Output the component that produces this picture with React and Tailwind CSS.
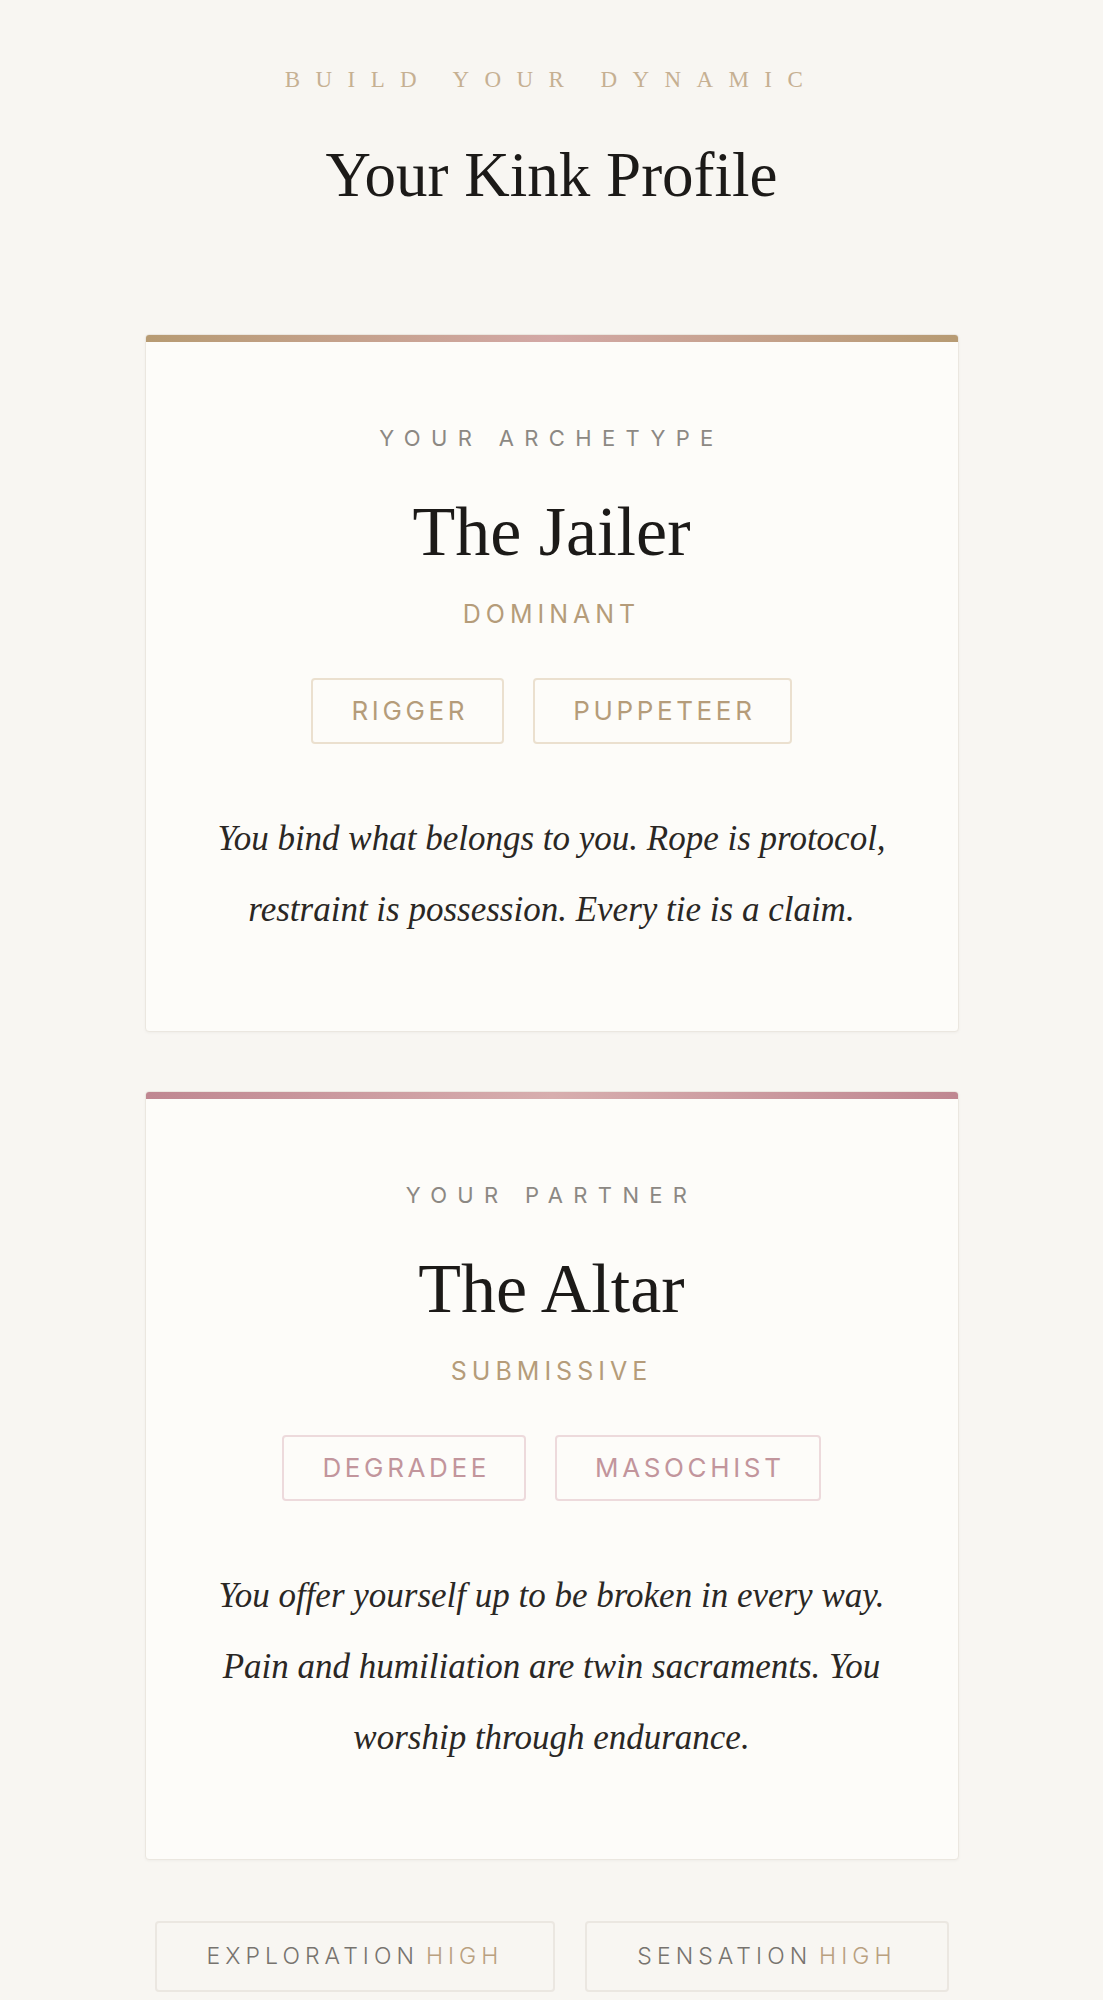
import React from "react";

const serif = { fontFamily: '"Liberation Serif", "Times New Roman", serif' };
const sans = { fontFamily: 'Inter, "Noto Sans", sans-serif' };

function Tag({ children, pink }) {
  return (
    <div
      style={sans}
      className={
        "border-2 rounded-[4px] py-[18px] pl-[38px] pr-[34px] text-[26px] leading-none tracking-[0.14em] " +
        (pink ? "border-[#eddadc] text-[#c2959c]" : "border-[#ebe0cf] text-[#b59c7a]")
      }
    >
      {children}
    </div>
  );
}

function Card({ gold, label, name, role, tags, text }) {
  return (
    <div className="w-[814px] mx-auto bg-[#fdfcf9] border border-[#ebe7e0] rounded-[4px] shadow-[0_1px_3px_rgba(0,0,0,0.04)] overflow-hidden">
      <div
        className={
          "h-[7px] " +
          (gold
            ? "bg-[linear-gradient(90deg,#b79b73_0%,#d3a8a6_50%,#b79b73_100%)]"
            : "bg-[linear-gradient(90deg,#bf8791_0%,#d7aeae_50%,#bf8791_100%)]")
        }
      />
      <div className="flex flex-col items-center pt-[85px] pb-[86px] px-[56px] text-center">
        <div
          style={sans}
          className="text-[22px] leading-none tracking-[0.47em] text-[#8c8883]"
        >
          {label}
        </div>
        <div style={serif} className="mt-[48px] text-[70px] leading-none text-[#1c1a18]">
          {name}
        </div>
        <div
          style={sans}
          className="mt-[35px] text-[25px] leading-none tracking-[0.2em] text-[#b59c7a]"
        >
          {role}
        </div>
        <div className="mt-[51px] flex gap-[29px]">
          {tags.map((t) => (
            <Tag key={t} pink={!gold}>
              {t}
            </Tag>
          ))}
        </div>
        <p style={serif} className="mt-[59px] italic text-[35px] leading-[71px] text-[#2a2724]">
          {text}
        </p>
      </div>
    </div>
  );
}

function Stat({ label }) {
  return (
    <div
      style={sans}
      className="border-2 border-[#ebe7e1] rounded-[4px] h-[71px] flex items-center px-[50px] text-[23px] leading-none tracking-[0.22em] font-light"
    >
      <span className="text-[#77736e]">{label}</span>
      <span className="text-[#b9a07f] ml-[0.3em]">HIGH</span>
    </div>
  );
}

export default function App() {
  return (
    <div className="min-h-screen bg-[#f8f6f2] pt-[68px] pb-[40px]">
      <div
        style={serif}
        className="text-center text-[23px] leading-none tracking-[0.67em] text-[#c6b092]"
      >
        BUILD YOUR DYNAMIC
      </div>
      <h1 style={serif} className="mt-[53px] text-center text-[63px] leading-none text-[#1c1a18]">
        Your Kink Profile
      </h1>
      <div className="mt-[127px]">
        <Card
          gold
          label="YOUR ARCHETYPE"
          name="The Jailer"
          role="DOMINANT"
          tags={["RIGGER", "PUPPETEER"]}
          text="You bind what belongs to you. Rope is protocol, restraint is possession. Every tie is a claim."
        />
      </div>
      <div className="mt-[59px]">
        <Card
          label="YOUR PARTNER"
          name="The Altar"
          role="SUBMISSIVE"
          tags={["DEGRADEE", "MASOCHIST"]}
          text="You offer yourself up to be broken in every way. Pain and humiliation are twin sacraments. You worship through endurance."
        />
      </div>
      <div className="mt-[61px] flex justify-center gap-[30px]">
        <Stat label="EXPLORATION" />
        <Stat label="SENSATION" />
      </div>
    </div>
  );
}
